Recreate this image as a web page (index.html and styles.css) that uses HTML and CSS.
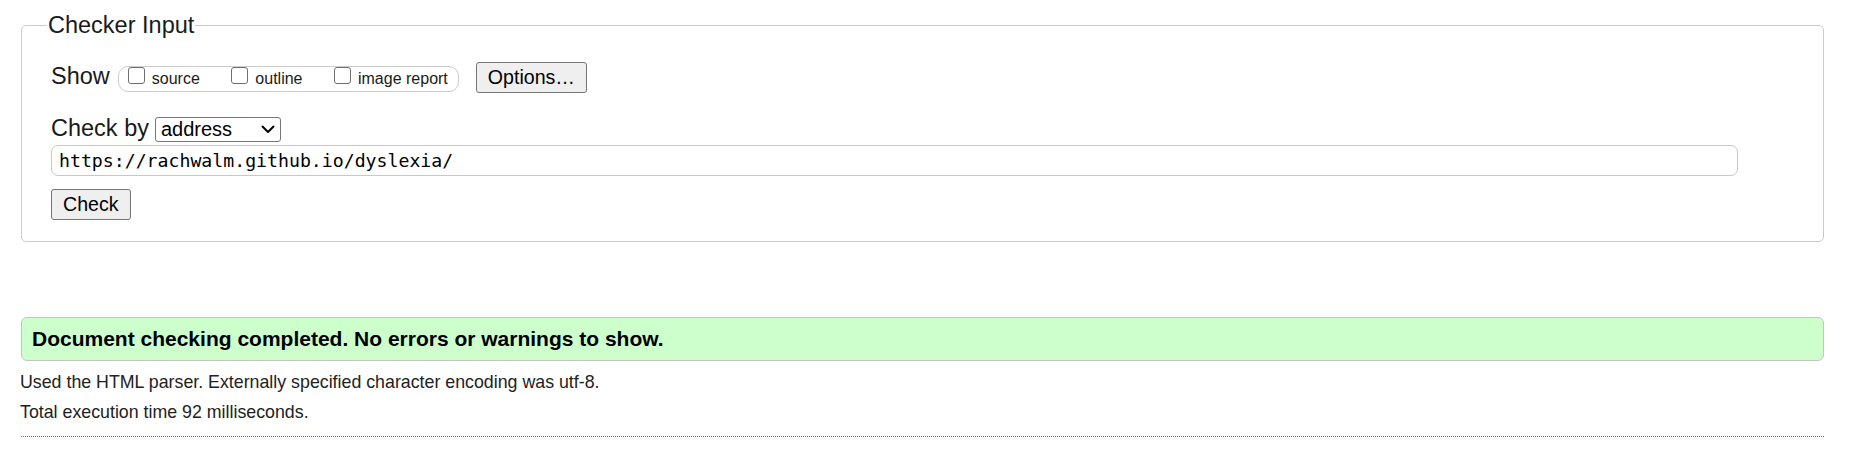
FILE: index.html
```html
<!DOCTYPE html>
<html lang="en">
<head>
<meta charset="utf-8">
<title>Nu Html Checker</title>
<link rel="stylesheet" href="styles.css">
</head>
<body>
<div class="page">
  <form class="checker">
    <fieldset class="checker-input">
      <legend class="checker-legend">Checker Input</legend>
      <div class="row row-show">
        <span class="row-label">Show</span>
        <span class="show-options">
          <label class="opt"><input type="checkbox" class="cb"><span class="opt-text">source</span></label>
          <label class="opt"><input type="checkbox" class="cb"><span class="opt-text">outline</span></label>
          <label class="opt opt-last"><input type="checkbox" class="cb"><span class="opt-text">image report</span></label>
        </span>
        <button type="button" class="btn btn-options">Options…</button>
      </div>
      <div class="row row-by">
        <label class="row-label" for="docselect">Check by</label>
        <span class="select-wrap">
          <select id="docselect" class="by-select"><option>address</option></select>
          <svg class="select-arrow" width="14" height="9" viewBox="0 0 14 9" aria-hidden="true"><path d="M1.5 1.5 L7 7 L12.5 1.5" fill="none" stroke="#000" stroke-width="2" stroke-linecap="round" stroke-linejoin="round"/></svg>
        </span>
      </div>
      <input class="url" type="url" value="https://rachwalm.github.io/dyslexia/">
      <div class="row row-submit">
        <button type="button" class="btn">Check</button>
      </div>
    </fieldset>
  </form>
  <p class="success">Document checking completed. No errors or warnings to show.</p>
  <p class="details details-first">Used the HTML parser. Externally specified character encoding was utf-8.</p>
  <p class="details">Total execution time 92 milliseconds.</p>
  <hr class="rule">
</div>
</body>
</html>
```

FILE: styles.css
```css
html, body {
  margin: 0;
  padding: 0;
  background: #ffffff;
}

body {
  font-family: "Liberation Sans", Arial, sans-serif;
  color: #222222;
}

.page {
  padding: 0 31px 0 20px;
}

.checker {
  margin: 0;
}

.checker-input {
  margin: 12px 0 0 1px;
  padding: 23px 0 21px 29px;
  border: 1px solid #cccccc;
  border-radius: 5px;
  min-width: 0;
}

.checker-legend {
  font-size: 23.5px;
  line-height: 27px;
  padding: 0 1px;
  margin-left: -4px;
  color: #1a1a1a;
}

.row {
  display: flex;
  align-items: baseline;
}

.row-label {
  font-size: 23.5px;
  line-height: 27px;
  color: #1a1a1a;
}

.show-options {
  display: flex;
  align-items: baseline;
  box-sizing: border-box;
  height: 26px;
  margin-left: 8px;
  padding: 0 10px 0 9px;
  border: 1px solid #cccccc;
  border-radius: 10px;
}

.opt {
  display: flex;
  align-items: baseline;
  margin-right: 31.5px;
}

.opt-last {
  margin-right: 0;
}

.cb {
  appearance: none;
  -webkit-appearance: none;
  box-sizing: border-box;
  width: 17px;
  height: 17px;
  margin: 0 7px 2px 0;
  border: 1.5px solid #6e6e6e;
  border-radius: 3px;
  background: #ffffff;
}

.opt-text {
  font-size: 16px;
  color: #1a1a1a;
}

.btn {
  box-sizing: border-box;
  height: 31px;
  padding: 0 11px;
  border: 1px solid #767676;
  border-radius: 3px;
  background: #efefef;
  color: #000000;
  font-family: "Liberation Sans", Arial, sans-serif;
  font-size: 19.6px;
}

.btn-options {
  margin-left: 17px;
}

.row-by {
  margin-top: 22px;
}

.select-wrap {
  position: relative;
  display: inline-flex;
  margin-left: 6px;
}

.by-select {
  appearance: none;
  -webkit-appearance: none;
  box-sizing: border-box;
  width: 126px;
  height: 25px;
  margin: 0;
  padding: 0 24px 0 5px;
  border: 1px solid #767676;
  border-radius: 3px;
  background: #ffffff;
  color: #000000;
  font-family: "Liberation Sans", Arial, sans-serif;
  font-size: 20px;
}

.select-arrow {
  position: absolute;
  right: 6px;
  top: 8px;
  pointer-events: none;
}

.url {
  display: block;
  box-sizing: border-box;
  width: calc(100% - 85px);
  height: 31px;
  margin: 3px 0 0;
  padding: 0 7px;
  border: 1px solid #c8c8c8;
  border-radius: 7px;
  background: #ffffff;
  color: #000000;
  font-family: "DejaVu Sans Mono", "Liberation Mono", monospace;
  font-size: 18.2px;
}

.row-submit {
  margin-top: 13px;
}

.success {
  display: flex;
  align-items: center;
  box-sizing: border-box;
  height: 44px;
  margin: 75px 0 0 1px;
  padding: 0 10px;
  border: 1px solid #c4c4c4;
  border-radius: 6px;
  background: #ccffcc;
  color: #000000;
  font-weight: bold;
  font-size: 21px;
}

.details {
  margin: 0;
  font-size: 17.8px;
  line-height: 30px;
  color: #222222;
}

.details-first {
  margin-top: 6px;
}

.rule {
  height: 0;
  margin: 9px 0 0 1px;
  border: 0;
  border-top: 1px dotted #707070;
}
```
